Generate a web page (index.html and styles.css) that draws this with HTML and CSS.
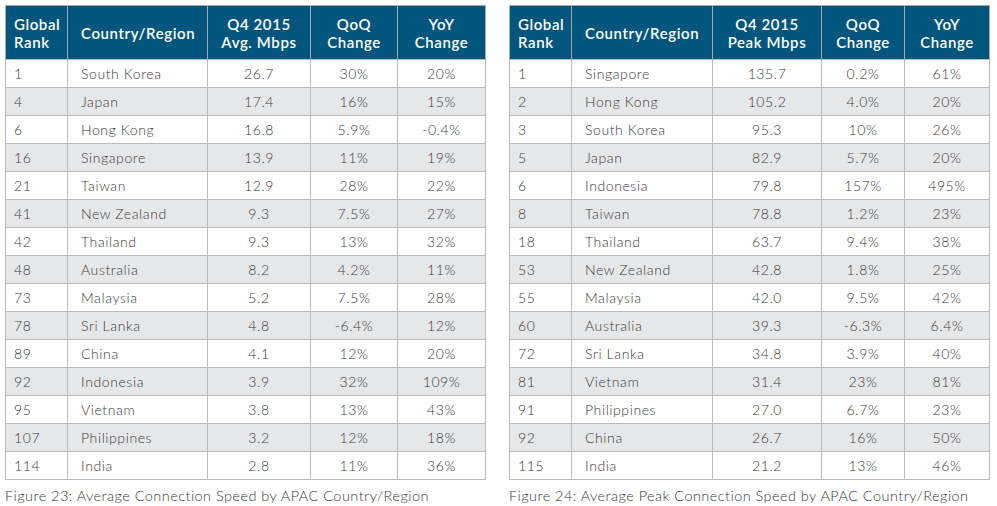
FILE: index.html
```html
<!DOCTYPE html>
<html>
<head>
<meta charset="utf-8">
<link rel="stylesheet" href="styles.css">
</head>
<body>
<div class="page">
  <figure class="fig">
    <table class="tbl t1">
      <colgroup><col class="c1"><col class="c2"><col class="c3"><col class="c4"><col class="c5"></colgroup>
      <thead>
        <tr><th class="l">Global<br>Rank</th><th class="l">Country/Region</th><th>Q4 2015<br>Avg. Mbps</th><th>QoQ<br>Change</th><th>YoY<br>Change</th></tr>
      </thead>
      <tbody>
        <tr><td class="l">1</td><td class="l">South Korea</td><td>26.7</td><td>30%</td><td>20%</td></tr>
        <tr><td class="l">4</td><td class="l">Japan</td><td>17.4</td><td>16%</td><td>15%</td></tr>
        <tr><td class="l">6</td><td class="l">Hong Kong</td><td>16.8</td><td>5.9%</td><td>-0.4%</td></tr>
        <tr><td class="l">16</td><td class="l">Singapore</td><td>13.9</td><td>11%</td><td>19%</td></tr>
        <tr><td class="l">21</td><td class="l">Taiwan</td><td>12.9</td><td>28%</td><td>22%</td></tr>
        <tr><td class="l">41</td><td class="l">New Zealand</td><td>9.3</td><td>7.5%</td><td>27%</td></tr>
        <tr><td class="l">42</td><td class="l">Thailand</td><td>9.3</td><td>13%</td><td>32%</td></tr>
        <tr><td class="l">48</td><td class="l">Australia</td><td>8.2</td><td>4.2%</td><td>11%</td></tr>
        <tr><td class="l">73</td><td class="l">Malaysia</td><td>5.2</td><td>7.5%</td><td>28%</td></tr>
        <tr><td class="l">78</td><td class="l">Sri Lanka</td><td>4.8</td><td>-6.4%</td><td>12%</td></tr>
        <tr><td class="l">89</td><td class="l">China</td><td>4.1</td><td>12%</td><td>20%</td></tr>
        <tr><td class="l">92</td><td class="l">Indonesia</td><td>3.9</td><td>32%</td><td>109%</td></tr>
        <tr><td class="l">95</td><td class="l">Vietnam</td><td>3.8</td><td>13%</td><td>43%</td></tr>
        <tr><td class="l">107</td><td class="l">Philippines</td><td>3.2</td><td>12%</td><td>18%</td></tr>
        <tr><td class="l">114</td><td class="l">India</td><td>2.8</td><td>11%</td><td>36%</td></tr>
      </tbody>
    </table>
    <figcaption class="cap">Figure 23: Average Connection Speed by APAC Country/Region</figcaption>
  </figure>
  <figure class="fig">
    <table class="tbl t2">
      <colgroup><col class="c1"><col class="c2"><col class="c3"><col class="c4"><col class="c5"></colgroup>
      <thead>
        <tr><th class="l">Global<br>Rank</th><th class="l">Country/Region</th><th>Q4 2015<br>Peak Mbps</th><th>QoQ<br>Change</th><th>YoY<br>Change</th></tr>
      </thead>
      <tbody>
        <tr><td class="l">1</td><td class="l">Singapore</td><td>135.7</td><td>0.2%</td><td>61%</td></tr>
        <tr><td class="l">2</td><td class="l">Hong Kong</td><td>105.2</td><td>4.0%</td><td>20%</td></tr>
        <tr><td class="l">3</td><td class="l">South Korea</td><td>95.3</td><td>10%</td><td>26%</td></tr>
        <tr><td class="l">5</td><td class="l">Japan</td><td>82.9</td><td>5.7%</td><td>20%</td></tr>
        <tr><td class="l">6</td><td class="l">Indonesia</td><td>79.8</td><td>157%</td><td>495%</td></tr>
        <tr><td class="l">8</td><td class="l">Taiwan</td><td>78.8</td><td>1.2%</td><td>23%</td></tr>
        <tr><td class="l">18</td><td class="l">Thailand</td><td>63.7</td><td>9.4%</td><td>38%</td></tr>
        <tr><td class="l">53</td><td class="l">New Zealand</td><td>42.8</td><td>1.8%</td><td>25%</td></tr>
        <tr><td class="l">55</td><td class="l">Malaysia</td><td>42.0</td><td>9.5%</td><td>42%</td></tr>
        <tr><td class="l">60</td><td class="l">Australia</td><td>39.3</td><td>-6.3%</td><td>6.4%</td></tr>
        <tr><td class="l">72</td><td class="l">Sri Lanka</td><td>34.8</td><td>3.9%</td><td>40%</td></tr>
        <tr><td class="l">81</td><td class="l">Vietnam</td><td>31.4</td><td>23%</td><td>81%</td></tr>
        <tr><td class="l">91</td><td class="l">Philippines</td><td>27.0</td><td>6.7%</td><td>23%</td></tr>
        <tr><td class="l">92</td><td class="l">China</td><td>26.7</td><td>16%</td><td>50%</td></tr>
        <tr><td class="l">115</td><td class="l">India</td><td>21.2</td><td>13%</td><td>46%</td></tr>
      </tbody>
    </table>
    <figcaption class="cap">Figure 24: Average Peak Connection Speed by APAC Country/Region</figcaption>
  </figure>
</div>
</body>
</html>
```

FILE: styles.css
```css
html, body {
  margin: 0;
  padding: 0;
  background: #ffffff;
}
body {
  font-family: "Lato", "Open Sans", "Liberation Sans", sans-serif;
  color: #3a3a3a;
}
.page {
  display: flex;
  gap: 24px;
  padding: 5px 0 0 5px;
}
.fig {
  margin: 0;
  width: 480px;
}
.tbl {
  border-collapse: collapse;
  table-layout: fixed;
  width: 480px;
  border: 1px solid #a7a9ab;
}
.t1 .c1 { width: 62px; }
.t1 .c2 { width: 140px; }
.t1 .c3 { width: 103px; }
.t1 .c4 { width: 87px; }
.t1 .c5 { width: 88px; }
.t2 .c1 { width: 62px; }
.t2 .c2 { width: 141px; }
.t2 .c3 { width: 109px; }
.t2 .c4 { width: 83px; }
.t2 .c5 { width: 85px; }
.tbl th {
  background: #02567e;
  color: #ffffff;
  font-weight: 600;
  font-size: 15px;
  line-height: 18px;
  height: 53px;
  padding: 0;
  text-align: center;
  border: 1px solid #a7a9ab;
  border-top: 0;
  border-bottom: 0;
  letter-spacing: 0.6px;
}
.tbl td {
  font-size: 14px;
  font-weight: 300;
  height: 27px;
  padding: 0;
  line-height: 26px;
  text-align: center;
  border: 1px solid #b9bbbd;
  color: #3a3a3a;
  letter-spacing: 0.6px;
}
.tbl th.l, .tbl td.l {
  text-align: left;
}
.tbl tr > :first-child.l { padding-left: 8px; }
.tbl tr > :nth-child(2).l { padding-left: 13px; }
.tbl tbody tr:nth-child(even) td {
  background: #e6e7e8;
}
.cap {
  margin-top: 7px;
  font-size: 14.5px;
  font-weight: 300;
  color: #3a3a3a;
  letter-spacing: 0.45px;
  white-space: nowrap;
}
```
